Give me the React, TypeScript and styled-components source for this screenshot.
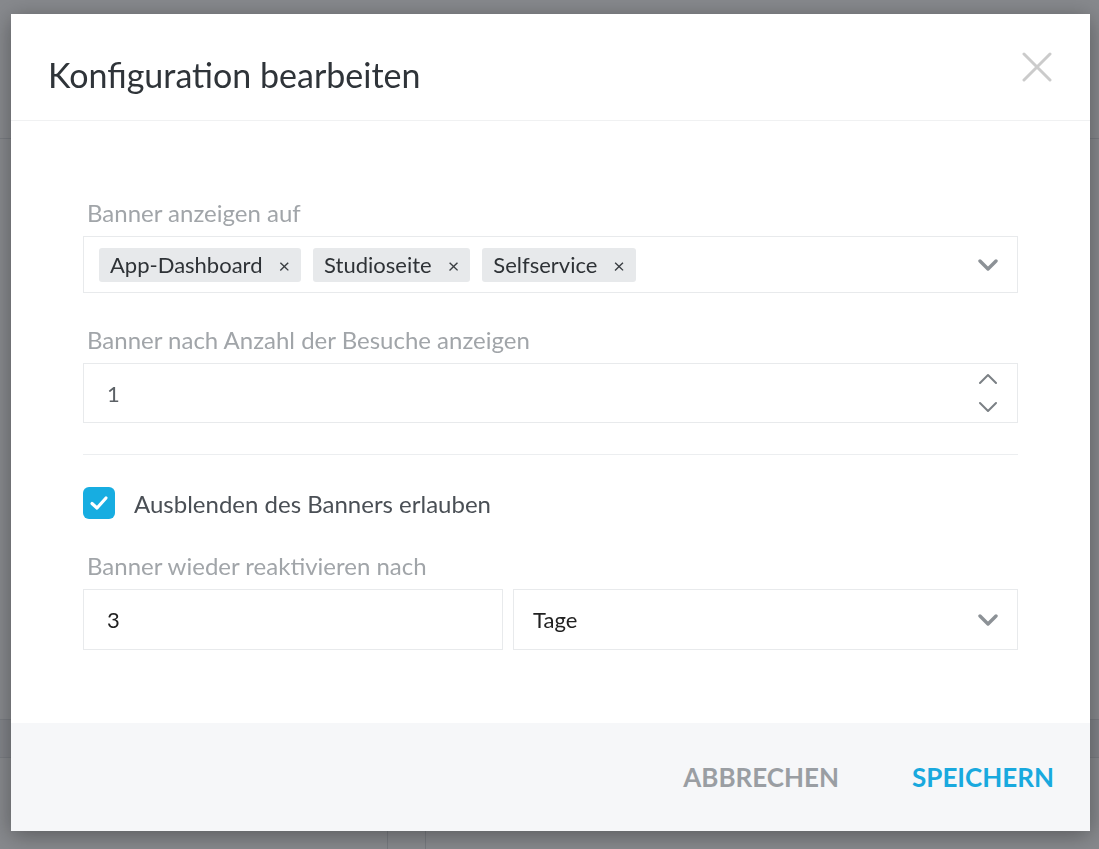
import React from 'react';
import styled, { createGlobalStyle } from 'styled-components';

const GlobalStyle = createGlobalStyle`
  html, body {
    margin: 0;
    padding: 0;
    width: 100%;
    height: 100%;
    overflow: hidden;
    background: #fff;
    font-family: Lato, 'Open Sans', sans-serif;
  }
`;

/* the page that sits under the overlay */
const Page = styled.div`
  width: 1099px;
  height: 849px;
  display: flex;
  flex-direction: column;
  background: #fff;
`;

const PageHeader = styled.div`
  height: 138px;
  border-bottom: 1px solid #e2e4e7;
`;

const PageSpacer = styled.div`
  height: 580px;
`;

const PageRow = styled.div`
  height: 37px;
  background: #f3f4f6;
  border-top: 1px solid #e2e4e7;
  border-bottom: 1px solid #e2e4e7;
`;

const PageCells = styled.div`
  flex: 1;
  display: flex;
  padding-left: 387px;
`;

const PageCell = styled.div`
  width: 37px;
  border-left: 1px solid #dfe1e4;
  border-right: 1px solid #dfe1e4;
`;

const Backdrop = styled.div`
  position: fixed;
  inset: 0;
  box-sizing: border-box;
  padding: 14px 9px 18px 11px;
  background: rgba(20, 24, 32, 0.51);
`;

const Modal = styled.div`
  width: 1079px;
  height: 817px;
  display: flex;
  flex-direction: column;
  background: #fff;
  box-shadow: 0 4px 22px rgba(0, 0, 0, 0.35);
`;

const Header = styled.div`
  height: 106px;
  display: flex;
  justify-content: space-between;
  align-items: flex-start;
  padding: 0 38px 0 37px;
  border-bottom: 1px solid #f0f1f2;
`;

const Title = styled.h1`
  margin: 41px 0 0;
  font-size: 34px;
  line-height: 40px;
  font-weight: 400;
  color: #2f3439;
`;

const CloseButton = styled.button`
  margin-top: 38px;
  width: 30px;
  height: 30px;
  padding: 0;
  border: 0;
  background: transparent;
  cursor: pointer;
  svg {
    display: block;
  }
`;

const Body = styled.div`
  flex: 1;
  padding: 80px 72px 0;
  display: flex;
  flex-direction: column;
`;

const Field = styled.div<{ $gap?: number }>`
  display: flex;
  flex-direction: column;
  margin-bottom: ${(p) => p.$gap ?? 0}px;
`;

const Label = styled.label`
  font-size: 24px;
  line-height: 24px;
  color: #a1a5a9;
  padding-left: 4px;
  margin-bottom: 11px;
`;

const Box = styled.div<{ $h: number; $w?: number }>`
  height: ${(p) => p.$h}px;
  box-sizing: border-box;
  border: 1px solid #e8eaec;
  display: flex;
  align-items: center;
  padding: 0 19px 0 15px;
  ${(p) => (p.$w ? `width: ${p.$w}px; flex: none;` : '')}
`;

const Row = styled.div`
  display: flex;
  gap: 10px;
  & > ${Box}:last-child {
    flex: 1;
  }
`;

const Chips = styled.div`
  flex: 1;
  display: flex;
  gap: 12px;
`;

const Chip = styled.span`
  height: 34px;
  display: inline-flex;
  align-items: center;
  gap: 16px;
  padding: 0 11px;
  background: #e7e9eb;
  border-radius: 3px;
  font-size: 22px;
  color: #2e3236;
`;

const ChipX = styled.span`
  font-size: 20px;
  color: #3a3e42;
`;

const Value = styled.span<{ $color?: string; $indent?: number }>`
  flex: 1;
  padding-left: ${(p) => p.$indent ?? 8}px;
  font-size: 22px;
  color: ${(p) => p.$color ?? '#222'};
`;

const Spinner = styled.div`
  display: flex;
  flex-direction: column;
  gap: 16px;
  svg {
    display: block;
  }
`;

const Divider = styled.hr`
  width: 100%;
  border: 0;
  border-top: 1px solid #eceef0;
  margin: 0 0 32px;
`;

const CheckRow = styled.div`
  height: 32px;
  display: flex;
  align-items: center;
  gap: 19px;
  margin-bottom: 35px;
`;

const CheckBox = styled.span`
  width: 32px;
  height: 32px;
  border-radius: 6px;
  background: #17ade1;
  display: flex;
  align-items: center;
  justify-content: center;
`;

const CheckLabel = styled.span`
  font-size: 24px;
  color: #4a4f55;
`;

const Footer = styled.div`
  height: 108px;
  background: #f6f7f9;
  display: flex;
  justify-content: flex-end;
  align-items: center;
  gap: 73px;
  padding-right: 36px;
`;

const FooterButton = styled.button<{ $primary?: boolean }>`
  border: 0;
  background: transparent;
  padding: 0;
  font-family: inherit;
  font-size: 26px;
  font-weight: 700;
  text-transform: uppercase;
  color: ${(p) => (p.$primary ? '#19a9de' : '#9a9ea3')};
  cursor: pointer;
`;

const Chevron = ({ up, bold }: { up?: boolean; bold?: boolean }) => (
  <svg width="20" height="12" viewBox="0 0 20 12">
    <path
      d={up ? 'M2 10 L10 2 L18 10' : 'M2 2 L10 10 L18 2'}
      fill="none"
      stroke={bold ? '#8c9196' : '#7b8085'}
      strokeWidth={bold ? 3.4 : 2}
      strokeLinecap="round"
      strokeLinejoin="round"
    />
  </svg>
);

const tags = ['App-Dashboard', 'Studioseite', 'Selfservice'];

export default function App() {
  return (
    <>
      <GlobalStyle />
      <Page>
        <PageHeader />
        <PageSpacer />
        <PageRow />
        <PageCells>
          <PageCell />
        </PageCells>
      </Page>
      <Backdrop>
        <Modal>
          <Header>
            <Title>Konfiguration bearbeiten</Title>
            <CloseButton aria-label="Schließen">
              <svg width="30" height="30" viewBox="0 0 30 30">
                <path d="M2 2 L28 28 M28 2 L2 28" stroke="#cbcbcb" strokeWidth="3" strokeLinecap="round" />
              </svg>
            </CloseButton>
          </Header>
          <Body>
            <Field $gap={35}>
              <Label>Banner anzeigen auf</Label>
              <Box $h={57}>
                <Chips>
                  {tags.map((t) => (
                    <Chip key={t}>
                      {t}
                      <ChipX>×</ChipX>
                    </Chip>
                  ))}
                </Chips>
                <Chevron bold />
              </Box>
            </Field>
            <Field $gap={31}>
              <Label>Banner nach Anzahl der Besuche anzeigen</Label>
              <Box $h={60}>
                <Value $color="#5c6166">1</Value>
                <Spinner>
                  <Chevron up />
                  <Chevron />
                </Spinner>
              </Box>
            </Field>
            <Divider />
            <CheckRow>
              <CheckBox>
                <svg width="20" height="16" viewBox="0 0 20 16">
                  <path d="M3 8.5 L8 13 L17 3" fill="none" stroke="#fff" strokeWidth="3.2" strokeLinecap="round" strokeLinejoin="round" />
                </svg>
              </CheckBox>
              <CheckLabel>Ausblenden des Banners erlauben</CheckLabel>
            </CheckRow>
            <Field>
              <Label>Banner wieder reaktivieren nach</Label>
              <Row>
                <Box $h={61} $w={420}>
                  <Value>3</Value>
                </Box>
                <Box $h={61}>
                  <Value $indent={4}>Tage</Value>
                  <Chevron bold />
                </Box>
              </Row>
            </Field>
          </Body>
          <Footer>
            <FooterButton>Abbrechen</FooterButton>
            <FooterButton $primary>Speichern</FooterButton>
          </Footer>
        </Modal>
      </Backdrop>
    </>
  );
}
